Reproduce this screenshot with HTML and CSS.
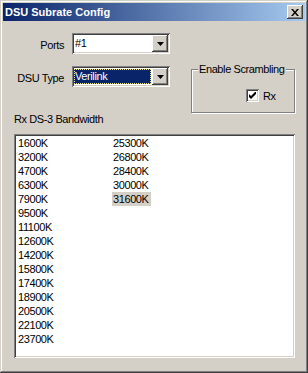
FILE: index.html
```html
<!DOCTYPE html>
<html lang="en">
<head>
    <meta charset="UTF-8">
    <title>DSU Subrate Config</title>
    <link rel="stylesheet" href="styles.css">
</head>
<body>

<div class="window">
    <div class="titlebar">
        <span class="title">DSU Subrate Config</span>
        <span class="close-btn">
            <svg width="8" height="7" viewBox="0 0 8 7"><path d="M0 0H2L4 2.5L6 0H8L5 3.5L8 7H6L4 4.5L2 7H0L3 3.5Z" fill="#000"/></svg>
        </span>
    </div>

    <div class="content">
        <div class="top-row">
            <div class="fields">
                <label class="field-label">Ports</label>
                <div class="combo">
                    <span class="combo-value">#1</span>
                    <span class="combo-btn"><svg width="7" height="4" viewBox="0 0 7 4"><path d="M0 0H7L3.5 4Z" fill="#000"/></svg></span>
                </div>

                <label class="field-label">DSU Type</label>
                <div class="combo">
                    <span class="combo-value selected">Verilink</span>
                    <span class="combo-btn"><svg width="7" height="4" viewBox="0 0 7 4"><path d="M0 0H7L3.5 4Z" fill="#000"/></svg></span>
                </div>
            </div>

            <fieldset class="group">
                <legend>Enable Scrambling</legend>
                <div class="check-row">
                    <span class="checkbox">
                        <svg width="7" height="7" viewBox="0 0 7 7"><path d="M0 2L2 4L6 0H7V2L2 7L0 5Z" fill="#000"/></svg>
                    </span>
                    <span>Rx</span>
                </div>
            </fieldset>
        </div>

        <div class="list-label">Rx DS-3 Bandwidth</div>
        <div class="listbox">
            <div class="list-items" id="rateList"></div>
        </div>
    </div>
</div>

<script>
    const rates = [1600, 3200, 4700, 6300, 7900, 9500, 11100, 12600, 14200, 15800,
                   17400, 18900, 20500, 22100, 23700, 25300, 26800, 28400, 30000, 31600];
    const list = document.getElementById('rateList');
    rates.forEach(rate => {
        const item = document.createElement('div');
        item.className = 'list-item';
        item.innerHTML = `<span${rate === 31600 ? ' class="selected"' : ''}>${rate}K</span>`;
        list.appendChild(item);
    });
</script>

</body>
</html>
```

FILE: styles.css
```css
body {
    margin: 0;
    font-family: "Liberation Sans", Arial, sans-serif;
    font-size: 11px;
    letter-spacing: -0.4px;
    color: #000;
    background-color: #d4d0c8;
}
.window {
    width: 308px;
    height: 373px;
    box-sizing: border-box;
    padding: 3px;
    background-color: #d4d0c8;
    box-shadow: inset -1px -1px #404040, inset 1px 1px #d4d0c8,
                inset -2px -2px #808080, inset 2px 2px #fff;
}
.titlebar {
    height: 18px;
    display: flex;
    align-items: center;
    justify-content: space-between;
    padding: 0 2px;
    background: linear-gradient(to right, #0a246a, #a6caf0);
}
.title {
    color: #fff;
    font-weight: bold;
    letter-spacing: 0;
}
.close-btn {
    width: 16px;
    height: 14px;
    display: flex;
    align-items: center;
    justify-content: center;
    background-color: #d4d0c8;
    box-shadow: inset -1px -1px #404040, inset 1px 1px #fff,
                inset -2px -2px #808080;
}
.content {
    padding: 0 10px 0 11px;
}
.top-row {
    display: flex;
    align-items: flex-start;
    margin-top: 12px;
}
.fields {
    display: grid;
    grid-template-columns: 50px 98px;
    grid-template-rows: 21px 21px;
    column-gap: 8px;
    row-gap: 12px;
}
.field-label {
    text-align: right;
    line-height: 13px;
    padding-top: 6px;
}
.combo {
    display: flex;
    height: 21px;
    box-sizing: border-box;
    padding: 2px;
    background-color: #fff;
    box-shadow: inset 1px 1px #808080, inset -1px -1px #fff,
                inset 2px 2px #404040, inset -2px -2px #d4d0c8;
}
.combo-value {
    flex: 1;
    padding-left: 1px;
    line-height: 17px;
}
.combo-value.selected {
    margin: 1px 1px 1px 0;
    line-height: 15px;
    color: #fff;
    background-color: #0a246a;
    outline: 1px dotted #f0e68c;
    outline-offset: -1px;
}
.combo-btn {
    width: 16px;
    height: 17px;
    display: flex;
    align-items: center;
    justify-content: center;
    background-color: #d4d0c8;
    box-shadow: inset -1px -1px #404040, inset 1px 1px #fff,
                inset -2px -2px #808080;
}
.group {
    width: 104px;
    box-sizing: border-box;
    margin: 30px 0 0 21px;
    padding: 0;
    border: 1px solid #808080;
    box-shadow: inset 1px 1px #fff, 1px 1px #fff;
}
.group legend {
    margin-left: 6px;
    padding: 0 1px;
    line-height: 13px;
    background-color: #d4d0c8;
}
.check-row {
    display: flex;
    align-items: center;
    gap: 4px;
    margin: 13px 0 10px 54px;
}
.checkbox {
    width: 13px;
    height: 13px;
    box-sizing: border-box;
    display: flex;
    align-items: center;
    justify-content: center;
    background-color: #fff;
    box-shadow: inset 1px 1px #808080, inset -1px -1px #fff,
                inset 2px 2px #404040, inset -2px -2px #d4d0c8;
}
.list-label {
    line-height: 13px;
}
.listbox {
    margin-top: 8px;
    height: 224px;
    box-sizing: border-box;
    padding: 2px 2px 2px 3px;
    background-color: #fff;
    box-shadow: inset 1px 1px #808080, inset -1px -1px #fff,
                inset 2px 2px #404040, inset -2px -2px #d4d0c8;
}
.list-items {
    display: grid;
    grid-auto-flow: column;
    grid-template-rows: repeat(15, 14px);
    grid-auto-columns: 95px;
}
.list-item span {
    display: inline-block;
    height: 14px;
    line-height: 14px;
    padding: 0 2px 0 1px;
}
.list-item span.selected {
    background-color: #d4d0c8;
}
```
